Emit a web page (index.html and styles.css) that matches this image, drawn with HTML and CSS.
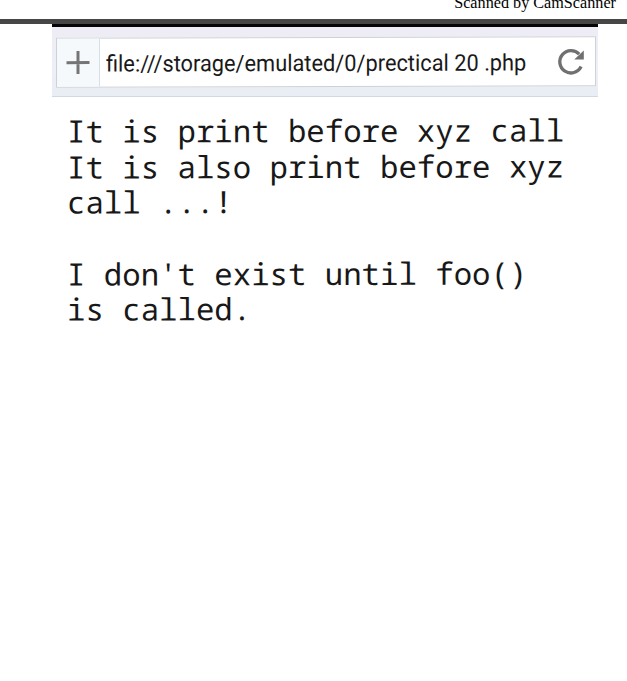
FILE: index.html
```html
<!DOCTYPE html>
<html lang="en">
<head>
<meta charset="utf-8">
<title>prectical 20 .php</title>
<link rel="stylesheet" href="styles.css">
</head>
<body>
<header class="scan-note"><span>Scanned by CamScanner</span></header>
<main class="screen">
  <div class="status-strip"></div>
  <nav class="toolbar">
    <div class="address">
      <div class="add"><svg width="24" height="24" viewBox="0 0 24 24"><path d="M12 0.5V23.5M0.5 12H23.5" stroke="#757575" stroke-width="3"/></svg></div>
      <div class="url"><span>file:///storage/emulated/0/prectical 20 .php</span></div>
      <svg class="reload" width="28" height="28" viewBox="0 0 28 28"><path d="M24.1 19.2A11.2 11.2 0 1 1 22.2 6.7" fill="none" stroke="#707070" stroke-width="3.3"/><path d="M26.8 3.2V12.2H17.2Z" fill="#707070"/></svg>
    </div>
  </nav>
  <pre class="output">It is print before xyz call
It is also print before xyz
call ...!

I don't exist until foo()
is called.</pre>
</main>
</body>
</html>
```
FILE: styles.css
```css
* { box-sizing: border-box; }
body { margin: 0; height: 681px; background: #fff; overflow: hidden; }
.scan-note {
  height: 24px;
  border-bottom: 5px solid #464646;
  display: flex;
  justify-content: flex-end;
  padding-right: 11px;
  overflow: hidden;
  font: 16.2px/18px "Liberation Serif", serif;
  color: #000;
}
.scan-note span { margin-top: -6px; white-space: nowrap; }
.screen { width: 546px; margin-left: 52px; }
.status-strip { height: 3px; background: #050505; }
.toolbar {
  height: 70px;
  padding: 10px 2px 0 4px;
  background: linear-gradient(#eeecf4, #edf0f6 60%, #e9eef4);
  border-bottom: 1px solid #d2d9df;
}
.address {
  height: 50px;
  display: flex;
  align-items: center;
  background: #fff;
  border: 1px solid #ccd2d8;
  transform: skewY(-0.14deg);
}
.add {
  width: 43px;
  height: 100%;
  display: flex;
  align-items: center;
  justify-content: center;
  background: #f5f9fc;
  border-right: 1px solid #d8e0e6;
}
.url {
  flex: 1;
  padding: 3px 0 0 6px;
  white-space: nowrap;
  font: 23px/30px Roboto, sans-serif;
  color: #191919;
}
.url span {
  display: inline-block;
  transform: scaleX(0.947);
  transform-origin: left;
}
.reload { margin-right: 10px; flex: none; }
.output {
  margin: 0;
  padding: 16px 0 0 15px;
  font: 30.7px/35.65px "Noto Sans Mono", "DejaVu Sans Mono", monospace;
  color: #181818;
  transform: skewY(-0.13deg);
}
```
